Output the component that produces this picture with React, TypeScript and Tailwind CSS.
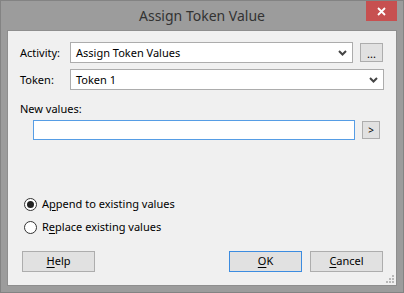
import React from "react";

const font = { fontFamily: '"Segoe UI", "Noto Sans", "Open Sans", sans-serif' };

function Chevron() {
  return (
    <svg width="9" height="6" viewBox="0 0 9 6" className="shrink-0">
      <path d="M1 1 L4.5 4.5 L8 1" fill="none" stroke="#444" strokeWidth="2" />
    </svg>
  );
}

function Combo({ value, width }: { value: string; width: string }) {
  return (
    <div className={`${width} h-[21px] bg-white border border-[#acacac] flex items-center pl-[5px] pr-[5px]`}>
      <span className="flex-1 text-[11px] leading-[19px] text-black">{value}</span>
      <Chevron />
    </div>
  );
}

function Radio({ checked, children }: { checked?: boolean; children: React.ReactNode }) {
  return (
    <div className="flex items-center h-[16px] ml-[4px]">
      <div className="w-[13px] h-[13px] rounded-full border border-[#333] bg-white flex items-center justify-center">
        {checked && <div className="w-[7px] h-[7px] rounded-full bg-[#222]" />}
      </div>
      <span className="ml-[5px] text-[11px] leading-[16px] text-black">{children}</span>
    </div>
  );
}

function Button({ children, focused, className = "" }: { children: React.ReactNode; focused?: boolean; className?: string }) {
  return (
    <div
      className={`w-[73px] h-[21px] bg-[#e1e1e1] border flex items-center justify-center text-[11px] text-black ${
        focused ? "border-[#3c8ce0]" : "border-[#adadad]"
      } ${className}`}
    >
      {children}
    </div>
  );
}

export default function App() {
  return (
    <div style={font} className="w-[404px] h-[293px] bg-[#9c9c9c] border border-[#838383] flex flex-col">
      {/* title bar */}
      <div className="relative h-[29px] flex items-center justify-center">
        <span className="text-[14px] text-[#333] leading-[20px] mt-[1px]">Assign Token Value</span>
        <div className="absolute top-0 right-[6px] w-[31px] h-[20px] bg-[#c75050] flex items-center justify-center">
          <svg width="9" height="9" viewBox="0 0 9 9">
            <path d="M1 1 L8 8 M8 1 L1 8" stroke="#fff" strokeWidth="1.8" />
          </svg>
        </div>
      </div>

      {/* client area */}
      <div className="relative mx-[6px] h-[256px] border border-[#8e8e8e] bg-[#f0f0f0] pt-[11px] px-[12px] flex flex-col">
        <div className="flex items-start">
          <span className="w-[50px] text-[11px] leading-[21px] text-black">Activity:</span>
          <Combo value="Assign Token Values" width="w-[283px]" />
          <div className="ml-[7px] mt-[1px] w-[23px] h-[19px] bg-[#e1e1e1] border border-[#adadad] flex items-center justify-center text-[11px] leading-none text-black pt-[2px]">
            ...
          </div>
        </div>

        <div className="flex items-start mt-[6px]">
          <span className="w-[50px] text-[11px] leading-[21px] text-black">Token:</span>
          <Combo value="Token 1" width="w-[314px]" />
        </div>

        <div className="mt-[11px] h-[15px] text-[11px] leading-[15px] text-black">New values:</div>

        <div className="flex items-start mt-[4px] ml-[13px]">
          <div className="w-[322px] h-[20px] bg-white border border-[#569de5]" />
          <div className="ml-[7px] mt-[1px] w-[18px] h-[18px] bg-[#e1e1e1] border border-[#adadad] flex items-center justify-center text-[10px] leading-none text-black">
            &gt;
          </div>
        </div>

        <div className="mt-[56px]">
          <Radio checked>
            A<span className="underline underline-offset-2">p</span>pend to existing values
          </Radio>
        </div>
        <div className="mt-[7px]">
          <Radio>
            R<span className="underline underline-offset-2">e</span>place existing values
          </Radio>
        </div>

        <div className="flex mt-[16px] ml-[2px] mr-[1px]">
          <Button>
            <span className="underline underline-offset-2">H</span>elp
          </Button>
          <div className="flex-1" />
          <Button focused>
            <span className="underline underline-offset-2">O</span>K
          </Button>
          <Button className="ml-[8px]">
            <span className="underline underline-offset-2">C</span>ancel
          </Button>
        </div>

        {/* size grip */}
        <svg width="9" height="9" viewBox="0 0 9 9" className="absolute right-[1px] bottom-[1px]">
          <rect x="6" y="0" width="2" height="2" fill="#b8b8b8" />
          <rect x="3" y="3" width="2" height="2" fill="#b8b8b8" />
          <rect x="6" y="3" width="2" height="2" fill="#b8b8b8" />
          <rect x="0" y="6" width="2" height="2" fill="#b8b8b8" />
          <rect x="3" y="6" width="2" height="2" fill="#b8b8b8" />
          <rect x="6" y="6" width="2" height="2" fill="#b8b8b8" />
        </svg>
      </div>
    </div>
  );
}
